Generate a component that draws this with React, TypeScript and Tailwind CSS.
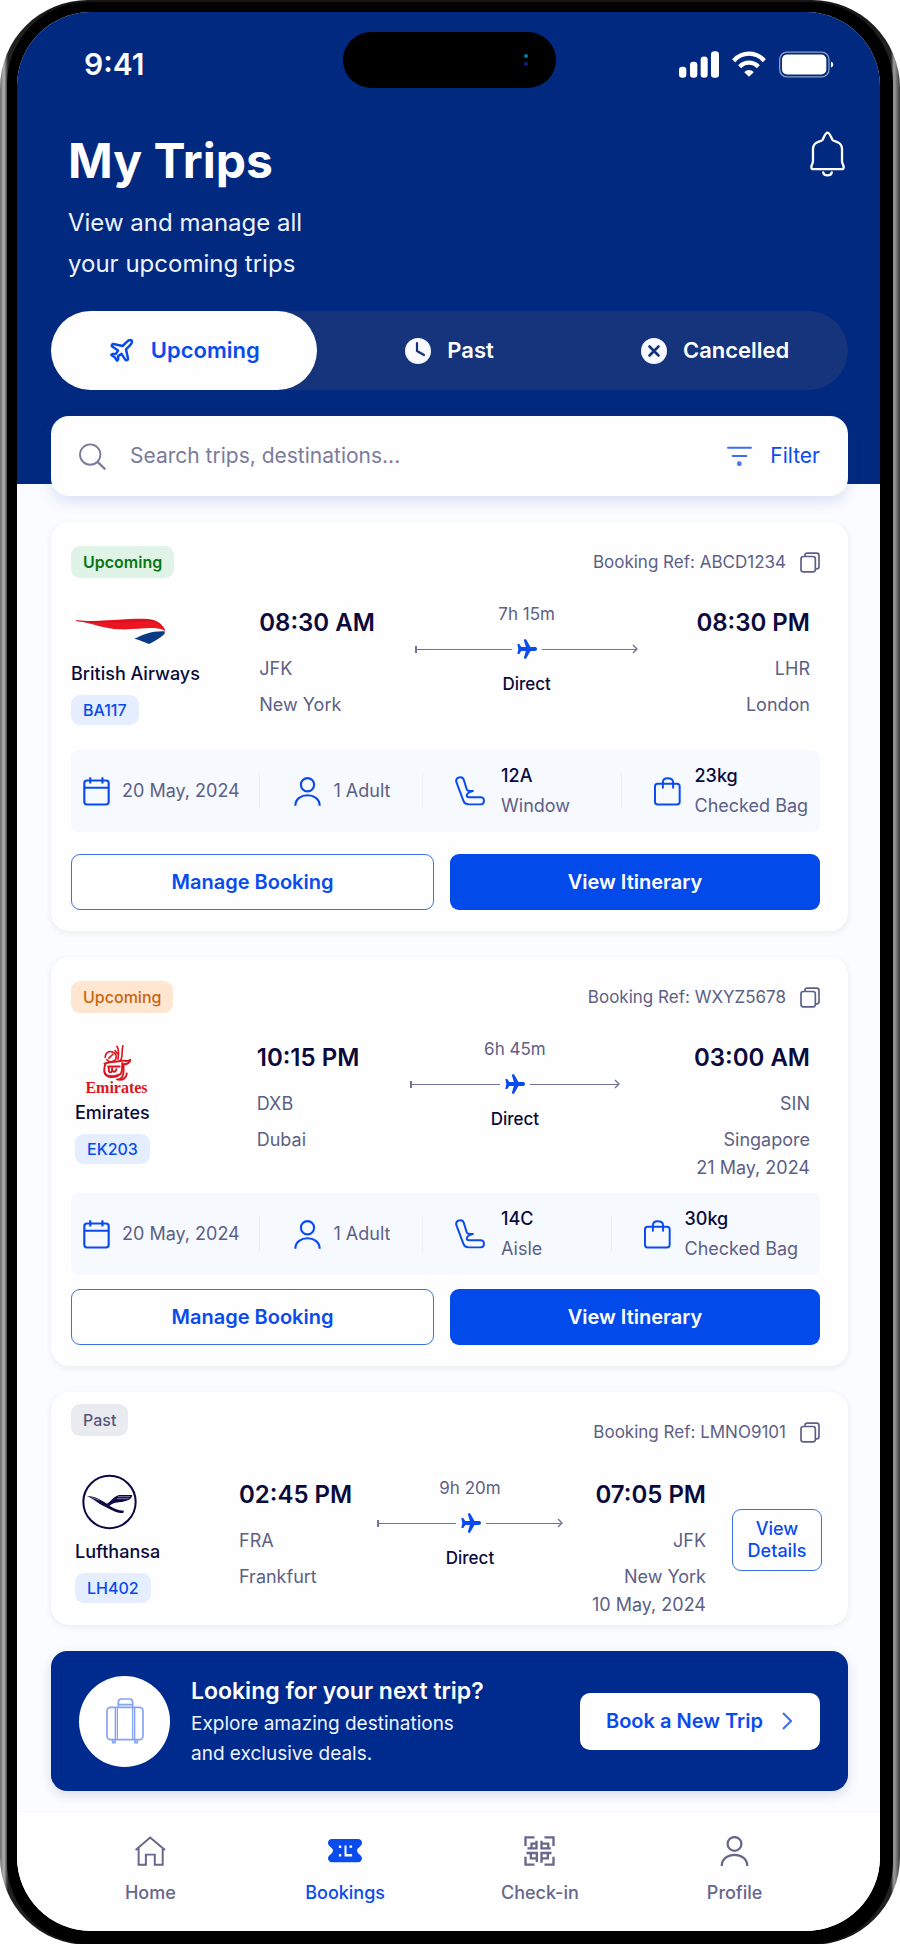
import { useState } from 'react';
import type { ReactNode } from 'react';
import { Plane } from 'lucide-react';

type Trip = {
  id: string;
  status: string;
  statusClass: string;
  reference: string;
  airline: string;
  flight: string;
  logo: ReactNode;
  airlineClass: string;
  routeClass: string;
  pathClass: string;
  departTime: string;
  departCode: string;
  departCity: string;
  duration: string;
  arriveTime: string;
  arriveCode: string;
  arriveCity: string;
  arriveDate?: string;
  details?: {
    date: string;
    passengers: string;
    seat: string;
    seatType: string;
    bag: string;
    gridClass: string;
  };
};

// ─── Status bar icons ─────────────────────────────────────
function SignalIcon() {
  return (
    <svg viewBox="0 0 120 80" className="h-[27px] w-10" fill="currentColor">
      <rect x="0" y="47" width="22" height="33" rx="10" />
      <rect x="33" y="32" width="22" height="48" rx="10" />
      <rect x="65" y="16" width="21" height="64" rx="10" />
      <rect x="96" y="0" width="24" height="80" rx="10" />
    </svg>
  );
}

function WifiIcon() {
  return (
    <svg viewBox="0 0 102 78" className="h-[26px] w-[34px]" fill="none" stroke="currentColor" strokeWidth="13">
      <path d="M5 29C31 1 71 1 97 29" />
      <path d="M23 47c16-16 40-16 56 0" />
      <path d="M51 77 37 64c7-9 21-9 28 0z" fill="currentColor" stroke="none" />
    </svg>
  );
}

function BatteryIcon() {
  return (
    <svg viewBox="0 0 165 80" className="h-[27px] w-[55px]" fill="none">
      <rect x="2" y="3" width="148" height="74" rx="22" stroke="currentColor" strokeOpacity="0.55" strokeWidth="4" />
      <rect x="9" y="10" width="133" height="60" rx="15" fill="currentColor" />
      <path d="M156 32c9 2 9 15 0 17z" fill="currentColor" />
    </svg>
  );
}

// ─── Interface icons ──────────────────────────────────────
function BellIcon() {
  return (
    <svg viewBox="0 0 106 138" className="h-[46px] w-[35px]" fill="none" stroke="currentColor" strokeWidth="7" strokeLinecap="round" strokeLinejoin="round">
      <path d="M53 4c-7 0-9 12-15 22-5 7-28 3-29 27v37c0 11-5 10-5 19 0 4 2 6 6 6h86c4 0 6-2 6-6 0-9-5-8-5-19V53c-1-24-24-20-29-27-6-10-8-22-15-22Z" />
      <path d="M40 125c3 12 23 12 26 0" />
    </svg>
  );
}

function ClockIcon() {
  return (
    <svg viewBox="0 0 26 26" className="size-[26px]" fill="none">
      <circle cx="13" cy="13" r="13" fill="#f8faff" />
      <path d="M12 5v8l7 4" stroke="#16327a" strokeWidth="2.2" strokeLinecap="round" strokeLinejoin="round" />
    </svg>
  );
}

function CrossIcon() {
  return (
    <svg viewBox="0 0 26 26" className="size-[26px]" fill="none">
      <circle cx="13" cy="13" r="13" fill="#f8faff" />
      <path d="m8.5 8.5 9 9m0-9-9 9" stroke="#16327a" strokeWidth="2.6" strokeLinecap="round" />
    </svg>
  );
}

function SearchIcon() {
  return (
    <svg viewBox="0 0 82 82" className="size-[27px]" fill="none" stroke="currentColor" strokeWidth="5.5">
      <circle cx="34" cy="35" r="31" />
      <path d="m57 58 23 22" strokeWidth="7" />
    </svg>
  );
}

function FilterIcon() {
  return (
    <svg viewBox="0 0 75 60" className="h-5 w-[25px]" fill="none" stroke="currentColor" strokeWidth="6" strokeLinecap="round">
      <path d="M3 5h69M17 30h41" />
      <circle cx="37" cy="53" r="4" />
    </svg>
  );
}

function CopyIcon() {
  return (
    <svg viewBox="0 0 60 62" className="h-[21px] w-5" fill="none" stroke="currentColor" strokeWidth="5" strokeLinejoin="round">
      <rect x="3" y="13" width="43" height="46" rx="7" />
      <path d="M15 12V9c0-4 3-6 7-6h28c4 0 7 3 7 7v33c0 4-3 7-7 7h-3" />
    </svg>
  );
}

function CalendarIcon() {
  return (
    <svg viewBox="0 0 82 87" className="h-[29px] w-[27px] shrink-0" fill="none" stroke="currentColor" strokeWidth="6.5">
      <rect x="4" y="10" width="74" height="73" rx="8" />
      <path d="M4 32h74M22 0v19M59 0v19" />
    </svg>
  );
}

function PersonIcon({ className }: { className: string }) {
  return (
    <svg viewBox="0 0 82 87" className={className} fill="none" stroke="currentColor" strokeWidth="6.5">
      <circle cx="41" cy="23" r="20" />
      <path d="M4 87c0-43 74-43 74 0" />
    </svg>
  );
}

function SeatIcon() {
  return (
    <svg viewBox="0 0 92 92" className="size-[30px] shrink-0" fill="none" stroke="currentColor" strokeWidth="6" strokeLinecap="round" strokeLinejoin="round">
      <path d="M36 60c0 4 3 5 7 5h37c12 0 12 22-1 22H42c-9 0-14-4-17-13L4 18C1 3 23-2 27 12l9 29c2 5 6 5 11 5h8c-8 2-18 4-19 14Z" />
    </svg>
  );
}

function BagIcon() {
  return (
    <svg viewBox="0 0 82 87" className="h-[29px] w-[27px] shrink-0" fill="none" stroke="currentColor" strokeWidth="6" strokeLinecap="round">
      <rect x="3" y="20" width="75" height="63" rx="8" />
      <path d="M27 32V16c0-9 5-13 14-13s17 4 17 13v16" />
    </svg>
  );
}

function FlightIcon() {
  return (
    <svg viewBox="0 0 61 60" className="size-5 shrink-0" fill="#0a4bee">
      <path d="M61 30c0 4-3 6-7 6H41L28 59c-2 2-7 1-7-2l6-21H13l-6 9H1l3-15-3-15h6l6 9h14L21 3c0-3 5-4 7-2l13 23h13c4 0 7 2 7 6Z" />
    </svg>
  );
}

function SuitcaseIcon() {
  return (
    <svg viewBox="0 0 114 138" className="h-[46px] w-[38px]" fill="none" stroke="#86a3f2" strokeWidth="5">
      <rect x="3" y="28" width="108" height="97" rx="11" />
      <path d="M28 28v97M34 28v97M80 28v97M86 28v97" strokeWidth="4" />
      <path d="M37 27V13c0-6 3-10 9-10h25c6 0 9 4 9 10v14M36 20h44" />
      <path d="M20 126v8h7v-8M87 126v8h7v-8" />
    </svg>
  );
}

function HomeIcon() {
  return (
    <svg viewBox="0 0 94 90" className="h-[30px] w-[31px]" fill="none" stroke="currentColor" strokeWidth="6">
      <path d="M2 42 46 4l45 38M11 37v50h22V56h27v31h24V37" />
    </svg>
  );
}

function TicketIcon() {
  return (
    <svg viewBox="0 0 103 90" className="h-[30px] w-[34px]">
      <path
        d="M12 9h79c7 0 12 5 12 12 0 10-15 14-15 23s15 13 15 23c0 7-5 12-12 12H12C5 79 0 74 0 67c0-10 15-14 15-23S0 31 0 21C0 14 5 9 12 9Z"
        fill="#0a4bee"
      />
      <path d="M33 28h7v8h-7zM33 54h7v8h-7zM50 28h6v26h17v8H50zM65 28h8v7h-8z" fill="#fff" />
    </svg>
  );
}

function QrIcon() {
  return (
    <svg viewBox="0 0 92 90" className="h-[30px] w-[31px]" fill="none" stroke="currentColor" strokeWidth="7">
      <path d="M4 30V4h27M61 4h27v26M88 62v24H61M31 86H4V62" />
      <path d="M10 37h27V14M22 37V23h15M52 14v23h28M52 23h20v14M7 51h31v27M20 51v16h18M52 80V51h30M52 67h19V51" />
    </svg>
  );
}

// ─── Airline logos ────────────────────────────────────────
function BritishAirwaysLogo() {
  return (
    <svg viewBox="0 0 267 80" className="ml-[5px] h-7 w-[89px]">
      <path d="M0 9c60 4 126-6 205-6 38 0 54 15 62 36-38-16-77-2-135-4C82 33 48 16 0 9Z" fill="#ec1622" />
      <path d="M0 9c90 9 170-1 220 0 24 2 38 12 47 30" fill="none" stroke="#c80f20" strokeWidth="3" />
      <path d="M175 63c30-12 47-23 91-22v7c-13 12-28 22-47 31-15-6-28-12-44-16Z" fill="#083a86" />
    </svg>
  );
}

function EmiratesLogo() {
  return (
    <div className="flex h-[50px] w-[83px] flex-col items-center text-[#dc1420]">
      <svg viewBox="0 0 84 110" className="h-9 w-7 shrink-0" fill="none" stroke="currentColor" strokeWidth="6" strokeLinecap="round" strokeLinejoin="round">
        <path d="M6 38C6 22 18 18 27 21c13 4 15 15 10 24-8 9-22 8-26 0M17 40l12-11M42 4c8 12 5 24 3 39M60 2c-5 14 2 31-8 46M36 17l9 12" strokeWidth="5" />
        <path d="M4 57c14-7 38-5 52-9 8-2 16 5 27-3-3 13-13 14-22 14M7 58c-6 12-5 30 2 34 12 7 32 3 42-2 8-5 7-19 7-35" />
        <path d="M15 66h35M17 69v11c3 5 8 5 10-1v-7M28 79c5 5 11 2 12-5M5 85c7 15 24 16 40 9M62 62v20c0 15-9 24-20 23 19 5 29-7 30-18" />
      </svg>
      <span className="font-['Liberation_Serif',serif] text-base leading-[14px] font-bold">Emirates</span>
    </div>
  );
}

function LufthansaLogo() {
  return (
    <svg viewBox="0 0 164 166" className="ml-[7px] h-14 w-[55px]" fill="none">
      <circle cx="82" cy="83" r="78" stroke="#0b0843" strokeWidth="6" />
      <path d="M14 65c26 0 43 12 60 23 13-7 22-25 40-26h36c-3 17-22 20-50 23-8 1-13 5-18 9 14 9 26 13 43 15l-2 7c-24 0-39-12-54-19-21-9-34-24-55-32Z" fill="#0b0843" />
      <path d="M104 73h35M108 67h36M28 69l24 9" stroke="#8d90b8" strokeWidth="2.5" />
    </svg>
  );
}

const TRIPS: Trip[] = [
  {
    id: 'ba117',
    status: 'Upcoming',
    statusClass: 'bg-[#dff4e6] text-[#0b7414] font-semibold',
    reference: 'ABCD1234',
    airline: 'British Airways',
    flight: 'BA117',
    logo: <BritishAirwaysLogo />,
    airlineClass: 'pt-[15px] gap-[15px]',
    routeClass: 'mt-6 mb-[25px] grid-cols-[188fr_156fr_222fr_172fr] pr-[10px]',
    pathClass: 'pt-px',
    departTime: '08:30 AM',
    departCode: 'JFK',
    departCity: 'New York',
    duration: '7h 15m',
    arriveTime: '08:30 PM',
    arriveCode: 'LHR',
    arriveCity: 'London',
    details: {
      date: '20 May, 2024',
      passengers: '1 Adult',
      seat: '12A',
      seatType: 'Window',
      bag: '23kg',
      gridClass: 'mb-[22px] grid-cols-[189fr_163fr_199fr_200fr]',
    },
  },
  {
    id: 'ek203',
    status: 'Upcoming',
    statusClass: 'bg-[#ffe6d0] text-[#c96410] font-medium',
    reference: 'WXYZ5678',
    airline: 'Emirates',
    flight: 'EK203',
    logo: <EmiratesLogo />,
    airlineClass: 'pt-2 gap-1 pl-1',
    routeClass: 'mt-6 mb-[15px] grid-cols-[186fr_153fr_211fr_190fr] pr-[10px]',
    pathClass: 'pt-px',
    departTime: '10:15 PM',
    departCode: 'DXB',
    departCity: 'Dubai',
    duration: '6h 45m',
    arriveTime: '03:00 AM',
    arriveCode: 'SIN',
    arriveCity: 'Singapore',
    arriveDate: '21 May, 2024',
    details: {
      date: '20 May, 2024',
      passengers: '1 Adult',
      seat: '14C',
      seatType: 'Aisle',
      bag: '30kg',
      gridClass: 'mb-[14px] grid-cols-[189fr_163fr_189fr_210fr]',
    },
  },
  {
    id: 'lh402',
    status: 'Past',
    statusClass: 'bg-[#e9ebf1] text-[#555879] font-medium',
    reference: 'LMNO9101',
    airline: 'Lufthansa',
    flight: 'LH402',
    logo: <LufthansaLogo />,
    airlineClass: 'gap-2 pl-1',
    routeClass: 'mt-[30px] grid-cols-[168fr_138fr_186fr_143fr_114fr]',
    pathClass: 'pt-[3px]',
    departTime: '02:45 PM',
    departCode: 'FRA',
    departCity: 'Frankfurt',
    duration: '9h 20m',
    arriveTime: '07:05 PM',
    arriveCode: 'JFK',
    arriveCity: 'New York',
    arriveDate: '10 May, 2024',
  },
];

const TABS = [
  { label: 'Upcoming', icon: <Plane className="size-[27px]" strokeWidth={2.2} /> },
  { label: 'Past', icon: <ClockIcon /> },
  { label: 'Cancelled', icon: <CrossIcon /> },
];

const NAV_ITEMS = [
  { label: 'Home', icon: <HomeIcon /> },
  { label: 'Bookings', icon: <TicketIcon />, active: true },
  { label: 'Check-in', icon: <QrIcon /> },
  { label: 'Profile', icon: <PersonIcon className="h-[30px] w-[29px]" /> },
];

function FlightPath({ trip }: { trip: Trip }) {
  return (
    <div className={`flex flex-col items-center text-[17px] leading-[22px] ${trip.pathClass}`}>
      <span>{trip.duration}</span>
      <div className="my-[14px] flex w-full items-center gap-[5px]">
        <span className="h-[7px] w-0.5 bg-[#73739a]" />
        <span className="-ml-[5px] h-px flex-1 bg-[#73739a]" />
        <FlightIcon />
        <span className="h-px flex-1 bg-[#73739a]" />
        <svg viewBox="0 0 6 10" className="-ml-[10px] h-[10px] w-1.5" fill="none" stroke="#73739a" strokeWidth="1.4">
          <path d="m1 1 4 4-4 4" />
        </svg>
      </div>
      <span className="font-medium text-[#0a0a3c]">Direct</span>
    </div>
  );
}

function TripDetails({ details }: { details: NonNullable<Trip['details']> }) {
  return (
    <div className={`grid h-[82px] items-center rounded-lg bg-[#f6f9fe] text-lg leading-[30px] ${details.gridClass}`}>
      <div className="flex items-center gap-3 pl-3">
        <span className="text-[#0a4bee]"><CalendarIcon /></span>
        <span className="whitespace-nowrap">{details.date}</span>
      </div>
      <div className="flex h-9 items-center gap-3 border-l border-[#ebeef5] pl-[34px]">
        <span className="text-[#0a4bee]"><PersonIcon className="h-[29px] w-[27px]" /></span>
        <span className="whitespace-nowrap">{details.passengers}</span>
      </div>
      <div className="flex h-9 items-center gap-4 border-l border-[#ebeef5] pl-8">
        <span className="text-[#0a4bee]"><SeatIcon /></span>
        <div className="whitespace-nowrap">
          <p className="font-medium text-[#0a0a3c]">{details.seat}</p>
          <p>{details.seatType}</p>
        </div>
      </div>
      <div className="flex h-9 items-center gap-[14px] border-l border-[#ebeef5] pl-8">
        <span className="text-[#0a4bee]"><BagIcon /></span>
        <div className="whitespace-nowrap">
          <p className="font-medium text-[#0a0a3c]">{details.bag}</p>
          <p>Checked Bag</p>
        </div>
      </div>
    </div>
  );
}

function TripCard({ trip }: { trip: Trip }) {
  const compact = !trip.details;

  return (
    <article
      className={`rounded-[18px] bg-[#fefefe] pr-7 pl-5 text-[#5d5f86] shadow-[0_2px_6px_rgba(30,50,100,0.09)] ${
        compact ? 'pt-3 pb-[10px]' : 'pt-6 pb-[21px]'
      }`}
    >
      {/* Status and booking reference */}
      <div className={`flex justify-between ${compact ? 'items-start' : 'items-center'}`}>
        <span className={`rounded-[9px] px-3 text-base leading-8 ${trip.statusClass}`}>{trip.status}</span>
        <div className={`flex items-center gap-[14px] text-[17px] leading-6 ${compact ? 'mt-4' : ''}`}>
          <span>Booking Ref: {trip.reference}</span>
          <button aria-label="Copy booking reference">
            <CopyIcon />
          </button>
        </div>
      </div>

      {/* Route */}
      <div className={`grid ${trip.routeClass}`}>
        <div className={`flex flex-col items-start ${trip.airlineClass}`}>
          {trip.logo}
          <div className="flex flex-col items-start gap-[7px]">
            <span className="text-lg leading-7 font-medium whitespace-nowrap text-[#0a0a3c]">{trip.airline}</span>
            <span className="rounded-[9px] bg-[#e4eefe] px-3 text-base leading-[30px] font-medium text-[#0a4bee]">
              {trip.flight}
            </span>
          </div>
        </div>
        <div className="text-lg leading-9 whitespace-nowrap">
          <p className="mb-[7px] text-2xl leading-[42px] font-semibold text-[#0a0a3c]">{trip.departTime}</p>
          <p>{trip.departCode}</p>
          <p>{trip.departCity}</p>
        </div>
        <FlightPath trip={trip} />
        <div className="text-right text-lg leading-9 whitespace-nowrap">
          <p className="mb-[7px] text-2xl leading-[42px] font-semibold text-[#0a0a3c]">{trip.arriveTime}</p>
          <p>{trip.arriveCode}</p>
          <p>{trip.arriveCity}</p>
          {trip.arriveDate && <p className="leading-5">{trip.arriveDate}</p>}
        </div>
        {compact && (
          <button className="mt-[35px] -mr-0.5 ml-[26px] h-[62px] rounded-[9px] border border-[#3f6fe8] text-lg leading-[22px] font-medium text-[#0a4bee]">
            View Details
          </button>
        )}
      </div>

      {trip.details && (
        <>
          <TripDetails details={trip.details} />
          <div className="grid grid-cols-[363fr_370fr] gap-4 text-xl font-semibold">
            <button className="h-14 rounded-[9px] border border-[#3f6fe8] text-[#0a4bee]">Manage Booking</button>
            <button className="h-14 rounded-[9px] bg-[#034aeb] text-white">View Itinerary</button>
          </div>
        </>
      )}
    </article>
  );
}

export default function App() {
  const [activeTab, setActiveTab] = useState('Upcoming');

  return (
    <div className="min-h-screen bg-white font-[Inter,sans-serif]">
      {/* Phone frame */}
      <div className="rounded-[88px] bg-[linear-gradient(to_right,#6b6b6b,#b4b4b4_4px,#222_8px,#161616_60px,#161616_calc(100%-60px),#222_calc(100%-9px),#a0a0a0_calc(100%-6px),#3a3a3a)] px-[7px] pt-0.5 pb-px">
        <div className="rounded-[82px] bg-black pt-[10px] pr-[13px] pb-[13px] pl-[10px]">
          <div className="overflow-hidden rounded-[74px] bg-[#fbfcff]">
            <header className="bg-[#00297f] pt-5 pr-8 pb-[94px] pl-[34px] text-white">
              {/* Status bar */}
              <div className="grid grid-cols-[1fr_auto_1fr] items-center">
                <span className="pt-2 pl-[33px] text-3xl leading-9 font-semibold">9:41</span>
                <div className="flex h-14 w-[213px] items-center justify-end rounded-full bg-black pr-6">
                  <div className="flex size-3 flex-col items-center justify-between">
                    <span className="size-1 rounded-full bg-[#087a9f]" />
                    <span className="size-1 rounded-full bg-[#151b8c]" />
                  </div>
                </div>
                <div className="flex items-center justify-end gap-[13px] pt-2 pr-[14px]">
                  <SignalIcon />
                  <WifiIcon />
                  <BatteryIcon />
                </div>
              </div>

              {/* Title */}
              <div className="mt-[43px] flex items-start justify-between pr-[3px] pl-[17px]">
                <div>
                  <h1 className="text-5xl leading-[60px] font-bold">My Trips</h1>
                  <p className="mt-[11px] text-2xl leading-[41px] text-[#eef3ff]">
                    View and manage all
                    <br />
                    your upcoming trips
                  </p>
                </div>
                <button aria-label="Notifications">
                  <BellIcon />
                </button>
              </div>

              {/* Trip tabs */}
              <div className="mt-[27px] grid grid-cols-3 rounded-full bg-[#16347b] text-[22px] font-semibold">
                {TABS.map((tab) => (
                  <button
                    key={tab.label}
                    onClick={() => setActiveTab(tab.label)}
                    className={`flex h-[79px] items-center justify-center gap-4 rounded-full ${
                      activeTab === tab.label ? 'bg-[#fefeff] text-[#0a4bee]' : 'text-white'
                    }`}
                  >
                    {tab.icon}
                    {tab.label}
                  </button>
                ))}
              </div>
            </header>

            <main className="relative -mt-[68px] pr-8 pl-[34px]">
              {/* Search */}
              <div className="flex h-20 items-center rounded-[18px] bg-[#fefefe] px-7 text-[21px] shadow-[0_6px_14px_rgba(40,80,190,0.15)]">
                <label htmlFor="trip-search" className="text-[#7b7b9c]">
                  <SearchIcon />
                </label>
                <input
                  id="trip-search"
                  type="search"
                  placeholder="Search trips, destinations..."
                  aria-label="Search trips"
                  className="ml-6 min-w-0 flex-1 outline-none placeholder:text-[#7b7b9c]"
                />
                <button className="flex items-center gap-[18px] text-[#0a4bee]">
                  <span className="text-[#3e6df2]">
                    <FilterIcon />
                  </span>
                  Filter
                </button>
              </div>

              <div className="mt-[26px] flex flex-col gap-[26px]">
                {TRIPS.map((trip) => (
                  <TripCard key={trip.id} trip={trip} />
                ))}
              </div>

              {/* Promo banner */}
              <section className="mt-[26px] flex h-[140px] items-center rounded-2xl bg-[#002b8e] px-7 text-white shadow-[0_4px_12px_rgba(30,50,120,0.15)]">
                <div className="flex size-[91px] shrink-0 items-center justify-center rounded-full bg-white">
                  <SuitcaseIcon />
                </div>
                <div className="ml-[21px] flex-1">
                  <h2 className="text-[23px] leading-9 font-semibold">Looking for your next trip?</h2>
                  <p className="text-[19px] leading-[30px] text-[#eef3ff]">
                    Explore amazing destinations
                    <br />
                    and exclusive deals.
                  </p>
                </div>
                <button className="flex h-[57px] w-60 items-center justify-between rounded-[10px] bg-white pr-7 pl-[26px] text-xl font-semibold text-[#0a4bee]">
                  Book a New Trip
                  <svg viewBox="0 0 10 18" className="h-[18px] w-[10px]" fill="none" stroke="#3e6df2" strokeWidth="2">
                    <path d="m1 1 8 8-8 8" />
                  </svg>
                </button>
              </section>
            </main>

            {/* Bottom navigation */}
            <nav className="mt-5 grid h-[120px] grid-cols-4 border-t border-[#f6f7fa] bg-[#fefefe] pt-6 pr-12 pl-9 text-lg font-medium text-[#67678c]">
              {NAV_ITEMS.map((item) => (
                <a
                  key={item.label}
                  href="#"
                  className={`flex flex-col items-center gap-[13px] ${item.active ? 'text-[#0a4bee]' : ''}`}
                >
                  {item.icon}
                  {item.label}
                </a>
              ))}
            </nav>
          </div>
        </div>
      </div>
    </div>
  );
}
